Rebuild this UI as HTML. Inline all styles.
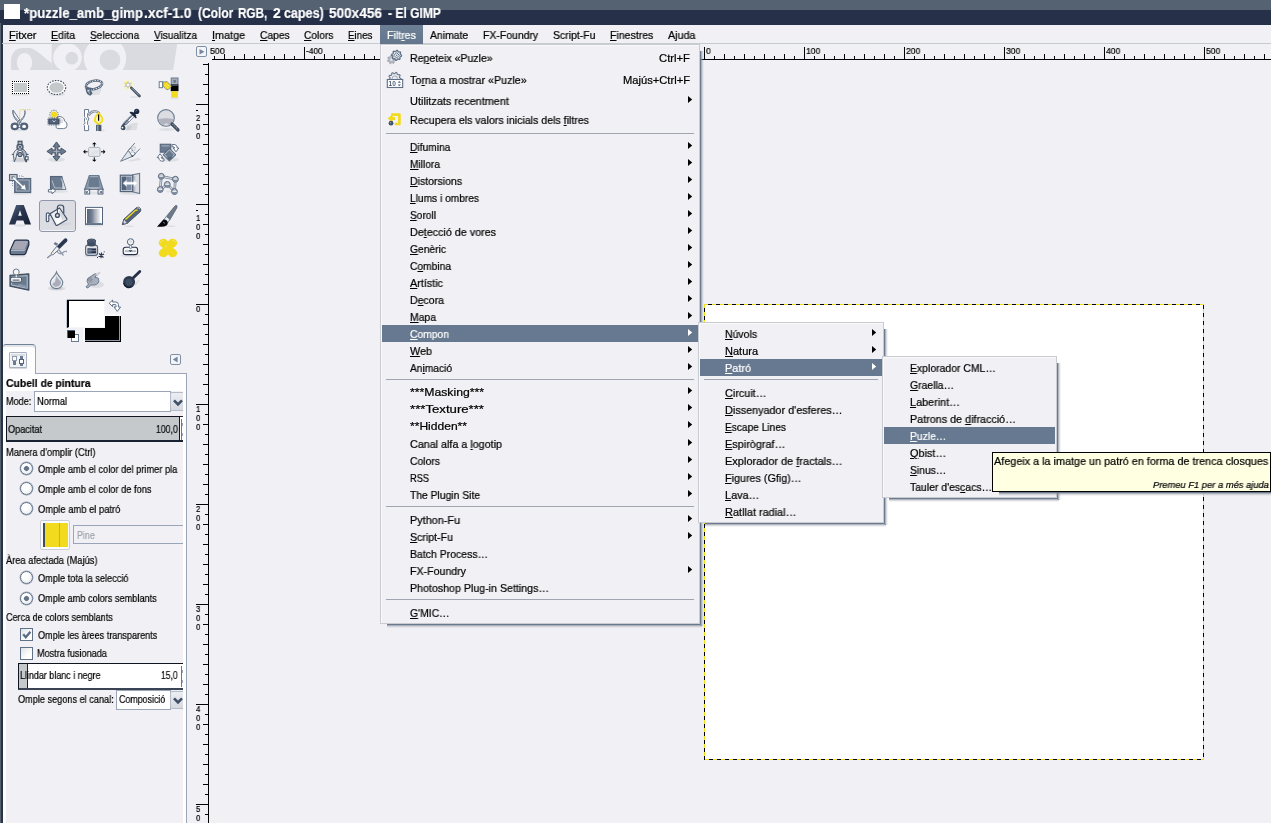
<!DOCTYPE html>
<html><head><meta charset="utf-8"><title>GIMP</title>
<style>
html,body{margin:0;padding:0;}
html{overflow:hidden;width:1271px;height:823px;}
body{width:1271px;height:823px;overflow:hidden;background:#f1f1f5;font-family:"Liberation Sans", sans-serif;position:relative;}
.t{will-change:transform;-webkit-text-stroke:0.22px currentColor;position:absolute;white-space:pre;font-family:"Liberation Sans", sans-serif;}
.b{position:absolute;box-sizing:border-box;}
u{text-decoration:underline;text-underline-offset:1.2px;text-decoration-thickness:1px;}
svg{position:absolute;overflow:visible;}
</style></head><body>
<div class="b" style="left:0px;top:0px;width:1271px;height:10px;background:#546271;"></div><div class="b" style="left:0px;top:10px;width:1271px;height:15px;background:#263149;"></div><div class="b" style="left:4px;top:4px;width:16px;height:15px;background:#fff;"></div><div class="t" style="top:5.0px;font-size:14px;line-height:16px;color:#fff;left:24.0px;transform:scaleX(0.9442);transform-origin:0 0;font-weight:bold;">*puzzle_amb_gimp</div><div class="t" style="top:5.0px;font-size:14px;line-height:16px;color:#fff;left:144.3px;transform:scaleX(0.9824);transform-origin:0 0;font-weight:bold;">.xcf-1.0</div><div class="t" style="top:5.0px;font-size:14px;line-height:16px;color:#fff;left:197.6px;transform:scaleX(0.8564);transform-origin:0 0;font-weight:bold;">(Color</div><div class="t" style="top:5.0px;font-size:14px;line-height:16px;color:#fff;left:237.7px;transform:scaleX(0.8371);transform-origin:0 0;font-weight:bold;">RGB,</div><div class="t" style="top:5.0px;font-size:14px;line-height:16px;color:#fff;left:272.5px;transform:scaleX(0.9876);transform-origin:0 0;font-weight:bold;">2</div><div class="t" style="top:5.0px;font-size:14px;line-height:16px;color:#fff;left:283.5px;transform:scaleX(0.8950);transform-origin:0 0;font-weight:bold;">capes)</div><div class="t" style="top:5.0px;font-size:14px;line-height:16px;color:#fff;left:328.7px;transform:scaleX(0.9704);transform-origin:0 0;font-weight:bold;">500x456</div><div class="t" style="top:5.0px;font-size:14px;line-height:16px;color:#fff;left:388.2px;transform:scaleX(0.8608);transform-origin:0 0;font-weight:bold;">- El GIMP</div><div class="b" style="left:0px;top:23px;width:1px;height:800px;background:#56636f;"></div><div class="b" style="left:1px;top:23px;width:2px;height:800px;background:#283349;"></div><div class="b" style="left:2px;top:43px;width:1269px;height:1px;background:#c6cbce;"></div><div class="t" style="top:27.6px;font-size:11px;line-height:14px;color:#000;left:9.3px;"><u>F</u>itxer</div><div class="t" style="top:27.6px;font-size:11px;line-height:14px;color:#000;left:51.3px;transform:scaleX(0.9610);transform-origin:0 0;"><u>E</u>dita</div><div class="t" style="top:27.6px;font-size:11px;line-height:14px;color:#000;left:89.8px;transform:scaleX(0.9140);transform-origin:0 0;"><u>S</u>elecciona</div><div class="t" style="top:27.6px;font-size:11px;line-height:14px;color:#000;left:153.8px;transform:scaleX(0.9192);transform-origin:0 0;"><u>V</u>isualitza</div><div class="t" style="top:27.6px;font-size:11px;line-height:14px;color:#000;left:211.9px;transform:scaleX(0.9839);transform-origin:0 0;"><u>I</u>matge</div><div class="t" style="top:27.6px;font-size:11px;line-height:14px;color:#000;left:259.5px;transform:scaleX(0.9341);transform-origin:0 0;"><u>C</u>apes</div><div class="t" style="top:27.6px;font-size:11px;line-height:14px;color:#000;left:303.7px;transform:scaleX(0.9246);transform-origin:0 0;"><u>C</u>olors</div><div class="t" style="top:27.6px;font-size:11px;line-height:14px;color:#000;left:347.6px;transform:scaleX(0.8863);transform-origin:0 0;"><u>E</u>ines</div><div class="b" style="left:380px;top:25px;width:43px;height:19px;background:linear-gradient(#6d7f94,#64768b);"></div><div class="t" style="top:27.6px;font-size:11px;line-height:14px;color:#fff;left:386.5px;transform:scaleX(0.9648);transform-origin:0 0;">Filt<u>r</u>es</div><div class="t" style="top:27.6px;font-size:11px;line-height:14px;color:#000;left:429.8px;transform:scaleX(0.9465);transform-origin:0 0;">Animate</div><div class="t" style="top:27.6px;font-size:11px;line-height:14px;color:#000;left:482.5px;transform:scaleX(0.9504);transform-origin:0 0;">FX-Foundry</div><div class="t" style="top:27.6px;font-size:11px;line-height:14px;color:#000;left:552.5px;transform:scaleX(0.9524);transform-origin:0 0;">Script-Fu</div><div class="t" style="top:27.6px;font-size:11px;line-height:14px;color:#000;left:609.7px;transform:scaleX(0.9569);transform-origin:0 0;"><u>F</u>inestres</div><div class="t" style="top:27.6px;font-size:11px;line-height:14px;color:#000;left:667.8px;transform:scaleX(0.9737);transform-origin:0 0;">A<u>j</u>uda</div><svg style="left:0;top:0" width="1271" height="823" shape-rendering="crispEdges"><rect x="212" y="59" width="1059" height="1" fill="#000"/><rect x="214" y="56" width="1" height="3" fill="#000"/><rect x="224" y="54" width="1" height="5" fill="#000"/><rect x="234" y="56" width="1" height="3" fill="#000"/><rect x="244" y="54" width="1" height="5" fill="#000"/><rect x="254" y="56" width="1" height="3" fill="#000"/><rect x="264" y="54" width="1" height="5" fill="#000"/><rect x="274" y="56" width="1" height="3" fill="#000"/><rect x="284" y="54" width="1" height="5" fill="#000"/><rect x="294" y="56" width="1" height="3" fill="#000"/><rect x="304" y="47" width="1" height="12" fill="#000"/><rect x="314" y="56" width="1" height="3" fill="#000"/><rect x="324" y="54" width="1" height="5" fill="#000"/><rect x="334" y="56" width="1" height="3" fill="#000"/><rect x="344" y="54" width="1" height="5" fill="#000"/><rect x="354" y="56" width="1" height="3" fill="#000"/><rect x="364" y="54" width="1" height="5" fill="#000"/><rect x="374" y="56" width="1" height="3" fill="#000"/><rect x="384" y="54" width="1" height="5" fill="#000"/><rect x="394" y="56" width="1" height="3" fill="#000"/><rect x="404" y="47" width="1" height="12" fill="#000"/><rect x="414" y="56" width="1" height="3" fill="#000"/><rect x="424" y="54" width="1" height="5" fill="#000"/><rect x="434" y="56" width="1" height="3" fill="#000"/><rect x="444" y="54" width="1" height="5" fill="#000"/><rect x="454" y="56" width="1" height="3" fill="#000"/><rect x="464" y="54" width="1" height="5" fill="#000"/><rect x="474" y="56" width="1" height="3" fill="#000"/><rect x="484" y="54" width="1" height="5" fill="#000"/><rect x="494" y="56" width="1" height="3" fill="#000"/><rect x="504" y="47" width="1" height="12" fill="#000"/><rect x="514" y="56" width="1" height="3" fill="#000"/><rect x="524" y="54" width="1" height="5" fill="#000"/><rect x="534" y="56" width="1" height="3" fill="#000"/><rect x="544" y="54" width="1" height="5" fill="#000"/><rect x="554" y="56" width="1" height="3" fill="#000"/><rect x="564" y="54" width="1" height="5" fill="#000"/><rect x="574" y="56" width="1" height="3" fill="#000"/><rect x="584" y="54" width="1" height="5" fill="#000"/><rect x="594" y="56" width="1" height="3" fill="#000"/><rect x="604" y="47" width="1" height="12" fill="#000"/><rect x="614" y="56" width="1" height="3" fill="#000"/><rect x="624" y="54" width="1" height="5" fill="#000"/><rect x="634" y="56" width="1" height="3" fill="#000"/><rect x="644" y="54" width="1" height="5" fill="#000"/><rect x="654" y="56" width="1" height="3" fill="#000"/><rect x="664" y="54" width="1" height="5" fill="#000"/><rect x="674" y="56" width="1" height="3" fill="#000"/><rect x="684" y="54" width="1" height="5" fill="#000"/><rect x="694" y="56" width="1" height="3" fill="#000"/><rect x="704" y="47" width="1" height="12" fill="#000"/><rect x="714" y="56" width="1" height="3" fill="#000"/><rect x="724" y="54" width="1" height="5" fill="#000"/><rect x="734" y="56" width="1" height="3" fill="#000"/><rect x="744" y="54" width="1" height="5" fill="#000"/><rect x="754" y="56" width="1" height="3" fill="#000"/><rect x="764" y="54" width="1" height="5" fill="#000"/><rect x="774" y="56" width="1" height="3" fill="#000"/><rect x="784" y="54" width="1" height="5" fill="#000"/><rect x="794" y="56" width="1" height="3" fill="#000"/><rect x="804" y="47" width="1" height="12" fill="#000"/><rect x="814" y="56" width="1" height="3" fill="#000"/><rect x="824" y="54" width="1" height="5" fill="#000"/><rect x="834" y="56" width="1" height="3" fill="#000"/><rect x="844" y="54" width="1" height="5" fill="#000"/><rect x="854" y="56" width="1" height="3" fill="#000"/><rect x="864" y="54" width="1" height="5" fill="#000"/><rect x="874" y="56" width="1" height="3" fill="#000"/><rect x="884" y="54" width="1" height="5" fill="#000"/><rect x="894" y="56" width="1" height="3" fill="#000"/><rect x="904" y="47" width="1" height="12" fill="#000"/><rect x="914" y="56" width="1" height="3" fill="#000"/><rect x="924" y="54" width="1" height="5" fill="#000"/><rect x="934" y="56" width="1" height="3" fill="#000"/><rect x="944" y="54" width="1" height="5" fill="#000"/><rect x="954" y="56" width="1" height="3" fill="#000"/><rect x="964" y="54" width="1" height="5" fill="#000"/><rect x="974" y="56" width="1" height="3" fill="#000"/><rect x="984" y="54" width="1" height="5" fill="#000"/><rect x="994" y="56" width="1" height="3" fill="#000"/><rect x="1004" y="47" width="1" height="12" fill="#000"/><rect x="1014" y="56" width="1" height="3" fill="#000"/><rect x="1024" y="54" width="1" height="5" fill="#000"/><rect x="1034" y="56" width="1" height="3" fill="#000"/><rect x="1044" y="54" width="1" height="5" fill="#000"/><rect x="1054" y="56" width="1" height="3" fill="#000"/><rect x="1064" y="54" width="1" height="5" fill="#000"/><rect x="1074" y="56" width="1" height="3" fill="#000"/><rect x="1084" y="54" width="1" height="5" fill="#000"/><rect x="1094" y="56" width="1" height="3" fill="#000"/><rect x="1104" y="47" width="1" height="12" fill="#000"/><rect x="1114" y="56" width="1" height="3" fill="#000"/><rect x="1124" y="54" width="1" height="5" fill="#000"/><rect x="1134" y="56" width="1" height="3" fill="#000"/><rect x="1144" y="54" width="1" height="5" fill="#000"/><rect x="1154" y="56" width="1" height="3" fill="#000"/><rect x="1164" y="54" width="1" height="5" fill="#000"/><rect x="1174" y="56" width="1" height="3" fill="#000"/><rect x="1184" y="54" width="1" height="5" fill="#000"/><rect x="1194" y="56" width="1" height="3" fill="#000"/><rect x="1204" y="47" width="1" height="12" fill="#000"/><rect x="1214" y="56" width="1" height="3" fill="#000"/><rect x="1224" y="54" width="1" height="5" fill="#000"/><rect x="1234" y="56" width="1" height="3" fill="#000"/><rect x="1244" y="54" width="1" height="5" fill="#000"/><rect x="1254" y="56" width="1" height="3" fill="#000"/><rect x="1264" y="54" width="1" height="5" fill="#000"/><rect x="208" y="63" width="1" height="760" fill="#000"/><rect x="203" y="64" width="5" height="1" fill="#000"/><rect x="205" y="74" width="3" height="1" fill="#000"/><rect x="203" y="84" width="5" height="1" fill="#000"/><rect x="205" y="94" width="3" height="1" fill="#000"/><rect x="196" y="104" width="12" height="1" fill="#000"/><rect x="205" y="114" width="3" height="1" fill="#000"/><rect x="203" y="124" width="5" height="1" fill="#000"/><rect x="205" y="134" width="3" height="1" fill="#000"/><rect x="203" y="144" width="5" height="1" fill="#000"/><rect x="205" y="154" width="3" height="1" fill="#000"/><rect x="203" y="164" width="5" height="1" fill="#000"/><rect x="205" y="174" width="3" height="1" fill="#000"/><rect x="203" y="184" width="5" height="1" fill="#000"/><rect x="205" y="194" width="3" height="1" fill="#000"/><rect x="196" y="204" width="12" height="1" fill="#000"/><rect x="205" y="214" width="3" height="1" fill="#000"/><rect x="203" y="224" width="5" height="1" fill="#000"/><rect x="205" y="234" width="3" height="1" fill="#000"/><rect x="203" y="244" width="5" height="1" fill="#000"/><rect x="205" y="254" width="3" height="1" fill="#000"/><rect x="203" y="264" width="5" height="1" fill="#000"/><rect x="205" y="274" width="3" height="1" fill="#000"/><rect x="203" y="284" width="5" height="1" fill="#000"/><rect x="205" y="294" width="3" height="1" fill="#000"/><rect x="196" y="304" width="12" height="1" fill="#000"/><rect x="205" y="314" width="3" height="1" fill="#000"/><rect x="203" y="324" width="5" height="1" fill="#000"/><rect x="205" y="334" width="3" height="1" fill="#000"/><rect x="203" y="344" width="5" height="1" fill="#000"/><rect x="205" y="354" width="3" height="1" fill="#000"/><rect x="203" y="364" width="5" height="1" fill="#000"/><rect x="205" y="374" width="3" height="1" fill="#000"/><rect x="203" y="384" width="5" height="1" fill="#000"/><rect x="205" y="394" width="3" height="1" fill="#000"/><rect x="196" y="404" width="12" height="1" fill="#000"/><rect x="205" y="414" width="3" height="1" fill="#000"/><rect x="203" y="424" width="5" height="1" fill="#000"/><rect x="205" y="434" width="3" height="1" fill="#000"/><rect x="203" y="444" width="5" height="1" fill="#000"/><rect x="205" y="454" width="3" height="1" fill="#000"/><rect x="203" y="464" width="5" height="1" fill="#000"/><rect x="205" y="474" width="3" height="1" fill="#000"/><rect x="203" y="484" width="5" height="1" fill="#000"/><rect x="205" y="494" width="3" height="1" fill="#000"/><rect x="196" y="504" width="12" height="1" fill="#000"/><rect x="205" y="514" width="3" height="1" fill="#000"/><rect x="203" y="524" width="5" height="1" fill="#000"/><rect x="205" y="534" width="3" height="1" fill="#000"/><rect x="203" y="544" width="5" height="1" fill="#000"/><rect x="205" y="554" width="3" height="1" fill="#000"/><rect x="203" y="564" width="5" height="1" fill="#000"/><rect x="205" y="574" width="3" height="1" fill="#000"/><rect x="203" y="584" width="5" height="1" fill="#000"/><rect x="205" y="594" width="3" height="1" fill="#000"/><rect x="196" y="604" width="12" height="1" fill="#000"/><rect x="205" y="614" width="3" height="1" fill="#000"/><rect x="203" y="624" width="5" height="1" fill="#000"/><rect x="205" y="634" width="3" height="1" fill="#000"/><rect x="203" y="644" width="5" height="1" fill="#000"/><rect x="205" y="654" width="3" height="1" fill="#000"/><rect x="203" y="664" width="5" height="1" fill="#000"/><rect x="205" y="674" width="3" height="1" fill="#000"/><rect x="203" y="684" width="5" height="1" fill="#000"/><rect x="205" y="694" width="3" height="1" fill="#000"/><rect x="196" y="704" width="12" height="1" fill="#000"/><rect x="205" y="714" width="3" height="1" fill="#000"/><rect x="203" y="724" width="5" height="1" fill="#000"/><rect x="205" y="734" width="3" height="1" fill="#000"/><rect x="203" y="744" width="5" height="1" fill="#000"/><rect x="205" y="754" width="3" height="1" fill="#000"/><rect x="203" y="764" width="5" height="1" fill="#000"/><rect x="205" y="774" width="3" height="1" fill="#000"/><rect x="203" y="784" width="5" height="1" fill="#000"/><rect x="205" y="794" width="3" height="1" fill="#000"/><rect x="196" y="804" width="12" height="1" fill="#000"/><rect x="205" y="814" width="3" height="1" fill="#000"/></svg><div class="t" style="top:46.0px;font-size:9.6px;line-height:10px;color:#000;left:209.7px;transform:scaleX(0.9179);transform-origin:0 0;">500</div><div class="t" style="top:46.0px;font-size:9.6px;line-height:10px;color:#000;left:306.0px;transform:scaleX(0.8723);transform-origin:0 0;">-400</div><div class="t" style="top:46.0px;font-size:9.6px;line-height:10px;color:#000;left:706.0px;transform:scaleX(0.8889);transform-origin:0 0;">0</div><div class="t" style="top:46.0px;font-size:9.6px;line-height:10px;color:#000;left:806.0px;transform:scaleX(0.8898);transform-origin:0 0;">100</div><div class="t" style="top:46.0px;font-size:9.6px;line-height:10px;color:#000;left:906.0px;transform:scaleX(0.8898);transform-origin:0 0;">200</div><div class="t" style="top:46.0px;font-size:9.6px;line-height:10px;color:#000;left:1006.0px;transform:scaleX(0.8898);transform-origin:0 0;">300</div><div class="t" style="top:46.0px;font-size:9.6px;line-height:10px;color:#000;left:1106.0px;transform:scaleX(0.8898);transform-origin:0 0;">400</div><div class="t" style="top:46.0px;font-size:9.6px;line-height:10px;color:#000;left:1206.0px;transform:scaleX(0.8898);transform-origin:0 0;">500</div><div class="b" style="left:196px;top:110px;width:2px;height:1px;background:#000;"></div><div class="t" style="top:113.3px;font-size:9.6px;line-height:10px;color:#000;left:195.8px;transform:scaleX(0.8234);transform-origin:0 0;">2</div><div class="t" style="top:122.3px;font-size:9.6px;line-height:10px;color:#000;left:195.8px;transform:scaleX(0.8234);transform-origin:0 0;">0</div><div class="t" style="top:131.3px;font-size:9.6px;line-height:10px;color:#000;left:195.8px;transform:scaleX(0.8234);transform-origin:0 0;">0</div><div class="b" style="left:196px;top:210px;width:2px;height:1px;background:#000;"></div><div class="t" style="top:213.3px;font-size:9.6px;line-height:10px;color:#000;left:195.8px;transform:scaleX(0.8234);transform-origin:0 0;">1</div><div class="t" style="top:222.3px;font-size:9.6px;line-height:10px;color:#000;left:195.8px;transform:scaleX(0.8234);transform-origin:0 0;">0</div><div class="t" style="top:231.3px;font-size:9.6px;line-height:10px;color:#000;left:195.8px;transform:scaleX(0.8234);transform-origin:0 0;">0</div><div class="t" style="top:304.3px;font-size:9.6px;line-height:10px;color:#000;left:195.8px;transform:scaleX(0.8234);transform-origin:0 0;">0</div><div class="t" style="top:404.3px;font-size:9.6px;line-height:10px;color:#000;left:195.8px;transform:scaleX(0.8234);transform-origin:0 0;">1</div><div class="t" style="top:413.3px;font-size:9.6px;line-height:10px;color:#000;left:195.8px;transform:scaleX(0.8234);transform-origin:0 0;">0</div><div class="t" style="top:422.3px;font-size:9.6px;line-height:10px;color:#000;left:195.8px;transform:scaleX(0.8234);transform-origin:0 0;">0</div><div class="t" style="top:504.3px;font-size:9.6px;line-height:10px;color:#000;left:195.8px;transform:scaleX(0.8234);transform-origin:0 0;">2</div><div class="t" style="top:513.3px;font-size:9.6px;line-height:10px;color:#000;left:195.8px;transform:scaleX(0.8234);transform-origin:0 0;">0</div><div class="t" style="top:522.3px;font-size:9.6px;line-height:10px;color:#000;left:195.8px;transform:scaleX(0.8234);transform-origin:0 0;">0</div><div class="t" style="top:604.3px;font-size:9.6px;line-height:10px;color:#000;left:195.8px;transform:scaleX(0.8234);transform-origin:0 0;">3</div><div class="t" style="top:613.3px;font-size:9.6px;line-height:10px;color:#000;left:195.8px;transform:scaleX(0.8234);transform-origin:0 0;">0</div><div class="t" style="top:622.3px;font-size:9.6px;line-height:10px;color:#000;left:195.8px;transform:scaleX(0.8234);transform-origin:0 0;">0</div><div class="t" style="top:704.3px;font-size:9.6px;line-height:10px;color:#000;left:195.8px;transform:scaleX(0.8234);transform-origin:0 0;">4</div><div class="t" style="top:713.3px;font-size:9.6px;line-height:10px;color:#000;left:195.8px;transform:scaleX(0.8234);transform-origin:0 0;">0</div><div class="t" style="top:722.3px;font-size:9.6px;line-height:10px;color:#000;left:195.8px;transform:scaleX(0.8234);transform-origin:0 0;">0</div><div class="t" style="top:804.3px;font-size:9.6px;line-height:10px;color:#000;left:195.8px;transform:scaleX(0.8234);transform-origin:0 0;">5</div><div class="t" style="top:813.3px;font-size:9.6px;line-height:10px;color:#000;left:195.8px;transform:scaleX(0.8234);transform-origin:0 0;">0</div><div class="t" style="top:822.3px;font-size:9.6px;line-height:10px;color:#000;left:195.8px;transform:scaleX(0.8234);transform-origin:0 0;">0</div><div class="b" style="left:196px;top:46px;width:11px;height:11px;border:1px solid #7f8fa6;border-radius:2px;background:#f4f5f8;"></div><svg style="left:199px;top:49px" width="6" height="6"><path d="M0.5,0 L5.5,2.7 L0.5,5.5 Z" fill="#7588a0"/></svg><div class="b" style="left:704px;top:304px;width:500px;height:456px;background:#fff;"></div><svg style="left:704px;top:304px" width="500" height="456" shape-rendering="crispEdges"><rect x="0.5" y="0.5" width="499" height="455" fill="none" stroke="#f4dc1f" stroke-width="1"/><g stroke="#000" stroke-width="1" stroke-dasharray="4 4" fill="none"><line x1="0" y1="0.5" x2="500" y2="0.5" stroke-dashoffset="4"/><line x1="0.5" y1="0" x2="0.5" y2="456" stroke-dashoffset="4"/><line x1="499.5" y1="0" x2="499.5" y2="456" stroke-dashoffset="7"/><line x1="0" y1="455.5" x2="500" y2="455.5" stroke-dashoffset="3"/></g></svg><svg style="left:0;top:0" width="190" height="75"><defs><clipPath id="wc"><rect x="0" y="44" width="190" height="26"/></clipPath></defs><g clip-path="url(#wc)"><path d="M10.9,70 L10.9,62 C10.9,53 15.5,47.9 22.5,47.9 L30.5,47.9 C36,49.5 43,56 51.8,63.4 L51.8,70 Z" fill="#dadbe0"/><ellipse cx="24.5" cy="62.7" rx="7.65" ry="9.7" fill="#f1f1f5"/><path d="M51.6,44 L177.2,44 L173.2,70 L51.6,70 Z" fill="#dadbe0"/><circle cx="67.5" cy="57.5" r="14.2" fill="#f1f1f5"/><circle cx="71.8" cy="58.2" r="6.4" fill="#dadbe0"/><circle cx="105" cy="58" r="21.2" fill="#f1f1f5"/><circle cx="110" cy="59.8" r="10.4" fill="#dadbe0"/></g></svg><div class="b" style="left:39px;top:200px;width:37px;height:32px;background:#dcdde3;border:1px solid #8f97a8;border-radius:3px;box-shadow:inset 0 -1px 0 #f4f4f7;"></div><svg style="left:0;top:0" width="190" height="300"><g transform="translate(8,76)"><g shape-rendering="crispEdges"><rect x="3" y="18" width="19" height="1" fill="#dcdee2"/><rect x="5" y="19" width="15" height="1" fill="#e6e7ea"/><rect x="4" y="5" width="17" height="13" fill="#fff"/><g fill="#000"><rect x="4" y="5" width="1" height="1"/><rect x="4" y="17" width="1" height="1"/><rect x="6" y="5" width="1" height="1"/><rect x="6" y="17" width="1" height="1"/><rect x="8" y="5" width="1" height="1"/><rect x="8" y="17" width="1" height="1"/><rect x="10" y="5" width="1" height="1"/><rect x="10" y="17" width="1" height="1"/><rect x="12" y="5" width="1" height="1"/><rect x="12" y="17" width="1" height="1"/><rect x="14" y="5" width="1" height="1"/><rect x="14" y="17" width="1" height="1"/><rect x="16" y="5" width="1" height="1"/><rect x="16" y="17" width="1" height="1"/><rect x="18" y="5" width="1" height="1"/><rect x="18" y="17" width="1" height="1"/><rect x="20" y="5" width="1" height="1"/><rect x="20" y="17" width="1" height="1"/><rect x="4" y="5" width="1" height="1"/><rect x="20" y="5" width="1" height="1"/><rect x="4" y="7" width="1" height="1"/><rect x="20" y="7" width="1" height="1"/><rect x="4" y="9" width="1" height="1"/><rect x="20" y="9" width="1" height="1"/><rect x="4" y="11" width="1" height="1"/><rect x="20" y="11" width="1" height="1"/><rect x="4" y="13" width="1" height="1"/><rect x="20" y="13" width="1" height="1"/><rect x="4" y="15" width="1" height="1"/><rect x="20" y="15" width="1" height="1"/><rect x="4" y="17" width="1" height="1"/><rect x="20" y="17" width="1" height="1"/></g><rect x="6" y="7" width="13" height="9" fill="#c5c9cc"/></g></g><g transform="translate(45,76)"><ellipse cx="12" cy="18.5" rx="8" ry="1.5" fill="#dcdee2" opacity="1"/><ellipse cx="11.5" cy="11.5" rx="9.2" ry="7" fill="#fff" stroke="#3f4d61" stroke-width="1.1" stroke-dasharray="1.6 1.2"/><ellipse cx="11.5" cy="11.5" rx="7.2" ry="5.2" fill="#c5c9cc"/></g><g transform="translate(82,76)"><path d="M4,14.5 L20,11.5 L17.5,18.5 L6,19.8 Z" fill="#dcdee2" opacity=".9"/><g transform="rotate(-12 12 8.9)"><ellipse cx="12" cy="8.9" rx="8.3" ry="4.1" fill="none" stroke="#52637a" stroke-width="2.5"/><ellipse cx="12" cy="8.9" rx="8.3" ry="4.1" fill="none" stroke="#e9ebef" stroke-width="1" stroke-dasharray="1.3 1.3"/></g><path d="M3.6,11.2 L9.6,11.8 L9,14.6 L10.6,17.6 L8.2,19.8 L5,17.8 L3.8,14.4 Z" fill="#52637a"/><path d="M6,13.5 L7.5,17.5 M5,15 L8,14" stroke="#dfe2e8" stroke-width=".8"/></g><g transform="translate(119,76)"><ellipse cx="15" cy="21" rx="4" ry="1" fill="#dcdee2" opacity="0.8"/><circle cx="9" cy="8.8" r="5.2" fill="#f8f5c4" opacity=".9"/><path d="M9,4.6 L10.3,7 L13,6.5 L11.5,8.8 L13,11.2 L10.3,10.7 L9,13 L7.7,10.7 L5,11.2 L6.5,8.8 L5,6.5 L7.7,7 Z" fill="#c5c9cc"/><rect x="8" y="7.8" width="2" height="2" fill="#fff"/><rect x="7" y="6.5" width="1.2" height="1.2" fill="#f2da1e"/><rect x="11.3" y="10.3" width="1.3" height="1.3" fill="#f2da1e"/><path d="M12.3,11.8 L20.5,20" stroke="#3f4d61" stroke-width="2.6" stroke-linecap="round"/><path d="M12.8,12.1 L20,19.3" stroke="#b9bec9" stroke-width=".8"/></g><g transform="translate(156,76)"><ellipse cx="18.5" cy="22.3" rx="4.5" ry="1" fill="#dcdee2" opacity="0.9"/><rect x="15.2" y="2" width="6.8" height="6.6" fill="#a6acb8" stroke="#6a7b8f" stroke-width="1"/><rect x="17.3" y="4" width="2.6" height="2.6" fill="#6a7b8f"/><rect x="14.7" y="8.6" width="7.8" height="6.6" fill="#000"/><rect x="15.5" y="9" width="6.3" height="1" fill="#3f4d61"/><rect x="15.2" y="15.2" width="6.8" height="6.3" fill="#f2da1e"/><rect x="3.2" y="5.7" width="3.4" height="6" fill="#fff" stroke="#6a7b8f" stroke-width="1"/><path d="M7,6 L11.2,5.6 L15.5,10.2 L12,13.8 L10,13.2 L7,10 Z" fill="#f2da1e" stroke="#6a7b8f" stroke-width=".7"/><path d="M9.5,9.5 L12.5,12.5 M11,8 L14,11" stroke="#fff" stroke-width=".7" stroke-dasharray="1 1"/></g><g transform="translate(8,108)"><ellipse cx="11.5" cy="22" rx="8" ry="1.2" fill="#dcdee2" opacity="0.9"/><path d="M5.1,2.1 C4,7 8,12 13.3,14 L11.5,15 C7,12 4,7 5.1,2.1 Z M5.1,2.1 L12.5,13" fill="#e4e6ea" stroke="#6a7b8f" stroke-width="1"/><path d="M16.8,2.5 C18,7 14,12 9,14 L10.5,15 C15,12 18,7 16.8,2.5 Z" fill="#e4e6ea" stroke="#6a7b8f" stroke-width="1"/><ellipse cx="6.8" cy="18.4" rx="3.1" ry="2.7" fill="#fff" stroke="#52637a" stroke-width="2.2"/><ellipse cx="16.1" cy="18.4" rx="3.1" ry="2.7" fill="#fff" stroke="#52637a" stroke-width="2.2"/><path d="M10,19.5 L11.5,15.5 L13,19.5 Z" fill="#fff" stroke="#52637a" stroke-width=".8"/><path d="M11.6,10 L11.6,4 Q11.6,1.6 14,1.6 L22.8,1.6" fill="none" stroke="#f2da1e" stroke-width="1.1" stroke-dasharray="1.2 0.9"/></g><g transform="translate(45,108)"><path d="M12.5,9 Q15,7.5 17.5,9.5 Q19.5,10 19.5,13 Q22.5,14 22,17.5 Q22,20.6 18.5,20.6 L13,20.6 Q10.5,20.5 11,17.5 Z" fill="#fff" stroke="#6a7b8f" stroke-width="1"/><path d="M14,11 Q16,9 18,12 L18,15 L14,15 Z" fill="#dcdde2"/><circle cx="9" cy="6.4" r="4.2" fill="none" stroke="#3f4d61" stroke-width=".9" stroke-dasharray=".9 .9"/><circle cx="9" cy="6.6" r="3.1" fill="#f2da1e"/><rect x="3.2" y="10.4" width="11.2" height="6.2" rx="1" fill="#3f4d61"/><rect x="4.4" y="11.4" width="8.8" height="4.2" fill="#52637a"/><rect x="2.7" y="9.9" width="12.2" height="7.2" rx="1" fill="none" stroke="#3f4d61" stroke-width=".7" stroke-dasharray=".9 .9"/><path d="M7.5,12.3 L9,14 L10.5,12.3" fill="none" stroke="#cfd3da" stroke-width=".9"/></g><g transform="translate(82,108)"><ellipse cx="19" cy="22.6" rx="4" ry="1" fill="#dcdee2" opacity="0.8"/><path d="M2.5,1.5 L6.6,1.5 L6.6,4.5 L5.6,5.5 L5.6,9 L6.6,10 L6.6,12 L5.6,13 L5.6,16.5 L6.6,17.5 L6.6,22.6 L2.5,22.6 L2.5,17.5 L1.7,16.5 L3.2,15 L2.5,13.5 L2.5,10.5 L3.2,9.5 L2.5,8.5 Z" fill="#fff" stroke="#6a7b8f" stroke-width="1"/><circle cx="4.5" cy="11" r=".8" fill="#6a7b8f"/><path d="M6.5,7.5 C9,3 14,1.5 17.5,5.5" fill="none" stroke="#6a7b8f" stroke-width="2.2"/><path d="M6.5,7.5 C9,3 14,1.5 17.5,5.5" fill="none" stroke="#eceef1" stroke-width=".9"/><path d="M16.6,5.2 C18.5,7 20.8,10.5 20.4,13 L16.6,16.6 L12.8,13 C12.4,10.5 14.8,7 16.6,5.2 Z" fill="#fbf5b0" stroke="#f2da1e" stroke-width="1.7"/><path d="M16.6,6.5 L16.6,12.8" stroke="#000" stroke-width="1.2"/><rect x="14" y="16.8" width="5.4" height="6.2" fill="#52637a"/><rect x="15.3" y="17.5" width="1" height="5.5" fill="#aab1bd"/><rect x="17.5" y="17.5" width="1" height="5.5" fill="#3f4d61"/></g><g transform="translate(119,108)"><path d="M6,22.4 L8,17.5 L14,14.8 L19,14.8 L17.5,22 Z" fill="#dcdee2"/><path d="M7,22 L8.5,18.5 L13,18 L11,22 Z" fill="#cdd0d6"/><path d="M15.2,6.4 L5.4,16.2" stroke="#52637a" stroke-width="3.6" stroke-linecap="butt"/><path d="M15,7.4 L9.5,12.9" stroke="#fff" stroke-width="1.4"/><path d="M9.5,12.9 L5.8,16.6" stroke="#9aa5b5" stroke-width="1.4"/><path d="M14.2,5.6 L4.8,15" stroke="#e9ebef" stroke-width=".8" stroke-dasharray="1 1"/><path d="M6,15.4 Q3,17.5 2.6,20.6" stroke="#3f4d61" stroke-width="2.2" fill="none"/><circle cx="4.2" cy="19.9" r="2.3" fill="#3f4d61"/><circle cx="3.4" cy="19.6" r=".9" fill="#fff"/><path d="M12.1,4.3 L16.7,8.7" stroke="#1c2741" stroke-width="2.4"/><path d="M10.8,4.3 L13.5,5.2 M16,8 L17.2,10.2" stroke="#1c2741" stroke-width="1.4"/><path d="M14.4,6.5 L17,4" stroke="#1c2741" stroke-width="3"/><circle cx="17.7" cy="3.4" r="2.6" fill="#1c2741"/><path d="M16.6,3.6 Q16.8,2.2 18.4,2.2" stroke="#6a7b8f" stroke-width=".9" fill="none"/></g><g transform="translate(156,108)"><ellipse cx="11" cy="21.5" rx="8" ry="1.5" fill="#dcdee2" opacity="0.9"/><circle cx="10" cy="9.9" r="8.3" fill="#dcdde2" stroke="#6a7b8f" stroke-width="1.1"/><path d="M2.6,11 Q10,9.5 17.4,11 Q16.5,16 13,17 L10.5,15 L7.5,17 Q3.5,15.5 2.6,11 Z" fill="#b0b3be"/><path d="M16,16 L22,22" stroke="#3f4d61" stroke-width="3.2" stroke-linecap="round"/><path d="M16.6,16.2 L21.8,21.4" stroke="#c9cdd6" stroke-width="1" stroke-dasharray="1 .8"/></g><g transform="translate(8,140)"><ellipse cx="11.8" cy="20.8" rx="9.5" ry="1.6" fill="#dcdee2" opacity="0.9"/><rect x="8" y="18" width="8" height="3.4" fill="#c9ccd2" opacity=".8"/><path d="M3.8,14.4 L20.6,14.4" stroke="#263149" stroke-width=".9"/><path d="M9.6,9 C6.5,10.5 5.2,13 5.4,15.5 L6.4,22 L8.2,17 C8.5,14 9.2,12 10.8,10.6 Z" fill="#e4e7eb" stroke="#52637a" stroke-width="1" stroke-linejoin="round"/><path d="M14.4,9 C17.5,10.5 18.8,13 18.6,15.5 L17.6,22 L15.8,17 C15.5,14 14.8,12 13.2,10.6 Z" fill="#a7b0be" stroke="#52637a" stroke-width="1" stroke-linejoin="round"/><rect x="10.1" y="1.2" width="3.9" height="3.7" fill="#a9afba" stroke="#3f4d61" stroke-width="1.1"/><rect x="9" y="4.9" width="6" height="4.1" rx="1" fill="#8b97a8" stroke="#3f4d61" stroke-width="1.1"/><circle cx="12" cy="6.9" r="1.5" fill="#3f4d61" stroke="#c9ced6" stroke-width=".8"/><path d="M9.9,12.4 Q12,9.9 14.1,12.4" fill="none" stroke="#52637a" stroke-width="2.2"/><path d="M9.9,12.4 Q12,9.9 14.1,12.4" fill="none" stroke="#fff" stroke-width="1"/><circle cx="12" cy="14.6" r="2" fill="#f4f5f7" stroke="#3f4d61" stroke-width="1.1"/><rect x="11.4" y="13.6" width="1.3" height="2" fill="#52637a"/><rect x="17.3" y="16.8" width="2.8" height="3" fill="#fff" stroke="#3f4d61" stroke-width="1"/><path d="M18.4,19.8 L18.4,22.4" stroke="#3f4d61" stroke-width="1"/></g><g transform="translate(45,140)"><ellipse cx="11.5" cy="19.6" rx="8.5" ry="2.4" fill="#dcdee2" opacity="1"/><path d="M11.5,1.9 L15,6.7 L12.95,6.7 L12.95,9.95 L16,9.95 L16,8 L21.1,11.4 L16,14.8 L16,12.85 L12.95,12.85 L12.95,16.4 L15,16.4 L11.5,21 L8,16.4 L10.05,16.4 L10.05,12.85 L7,12.85 L7,14.8 L1.9,11.4 L7,8 L7,9.95 L10.05,9.95 L10.05,6.7 L8,6.7 Z" fill="#6a7b8f" stroke="#3f4d61" stroke-width=".9" stroke-linejoin="miter"/><path d="M11.5,8.6 L11.5,14.2 M8.7,11.4 L14.3,11.4" stroke="#aab1bd" stroke-width="1"/></g><g transform="translate(82,140)"><rect x="6.6" y="7.4" width="11.4" height="9" rx="1.2" fill="#e7e8eb" stroke="#aab0bf" stroke-width="1"/><path d="M9,14.5 L11,12 M11.5,14 L13.5,11 M14,13.5 L15.5,11" stroke="#d3d5db" stroke-width=".8"/><rect x="11.8" y="4.1" width="1" height="2.5" fill="#000"/><path d="M10.100000000000001,4.3 L12.3,2.1999999999999997 L14.5,4.3 Z" fill="#000"/><rect x="11.8" y="17.4" width="1" height="2.5" fill="#000"/><path d="M10.100000000000001,19.7 L12.3,21.799999999999997 L14.5,19.7 Z" fill="#000"/><rect x="3.1" y="11.3" width="2.5" height="1" fill="#000"/><path d="M3.3000000000000003,9.600000000000001 L1.2000000000000002,11.8 L3.3000000000000003,14.0 Z" fill="#000"/><rect x="19" y="11.3" width="2.5" height="1" fill="#000"/><path d="M21.3,9.600000000000001 L23.4,11.8 L21.3,14.0 Z" fill="#000"/></g><g transform="translate(119,140)"><path d="M8,21 L20,17.5 L22,20 L12,21.5 Z" fill="#dcdee2"/><path d="M1.6,21.3 L9.4,10.4 L13.4,16.4 Z" fill="#e2e4e8" stroke="#6a7b8f" stroke-width="1"/><path d="M9.4,10.4 L11.5,8 L16.5,14 L13.4,16.4 Z" fill="#fff" stroke="#6a7b8f" stroke-width="1"/><path d="M9.4,10.4 L15.8,3 M13.4,16.4 L21,8.6" stroke="#6a7b8f" stroke-width="1"/><ellipse cx="14.3" cy="9.6" rx="1.3" ry="3.2" transform="rotate(35 14.3 9.6)" fill="none" stroke="#c9ccd4" stroke-width="1"/><rect x="12.6" y="15.4" width="1.6" height="1.6" fill="#3f4d61"/></g><g transform="translate(156,140)"><ellipse cx="14" cy="19.5" rx="9" ry="2" fill="#dcdee2" opacity="0.9"/><rect x="4.2" y="4.2" width="10.6" height="8" fill="#6a7b8f" stroke="#52637a" stroke-width="1"/><rect x="5.5" y="5.4" width="8" height="1" fill="#a9b2c0"/><path d="M13.4,8.3 L20,14.7 L13.4,21 L7,14.7 Z" fill="#6a7b8f" stroke="#52637a" stroke-width="1"/><path d="M13.4,9.8 L18.5,14.7 L13.4,19.5 L8.5,14.7 Z" fill="none" stroke="#dfe2e8" stroke-width=".7"/><path d="M10.5,17.5 L13.4,20.3 L17.3,16.5 Z" fill="#52637a"/><path d="M16,4.6 Q21,3.6 21.2,8 L22.8,8 L20,11.8 L17,8 L18.8,8 Q18.6,6.4 16,6.8 Z" fill="#fff" stroke="#52637a" stroke-width=".9" stroke-linejoin="round"/><path d="M8,21 Q3,22 2.8,17.6 L1.2,17.6 L4,13.8 L7,17.6 L5.2,17.6 Q5.4,19.2 8,18.8 Z" fill="#fff" stroke="#52637a" stroke-width=".9" stroke-linejoin="round"/></g><g transform="translate(8,172)"><ellipse cx="14" cy="21.5" rx="10" ry="1.3" fill="#dcdee2" opacity="0.9"/><rect x="6.7" y="6.5" width="16" height="14" fill="#6a7b8f" stroke="#52637a" stroke-width="1.1"/><rect x="8.2" y="8" width="13" height="11" fill="none" stroke="#b4bcc8" stroke-width=".8"/><path d="M9,4 L15,4 L15,9 M4.5,9 L4.5,14.5" stroke="#8b97a8" stroke-width="1" stroke-dasharray="1 1" fill="none"/><rect x="1.5" y="2.5" width="7.5" height="6" fill="#c5c9cc" stroke="#52637a" stroke-width="1.1"/><rect x="3.5" y="4.3" width="3" height="2.4" fill="#6a7b8f"/><path d="M5,5.5 L15.5,15.5" stroke="#fff" stroke-width="1.6"/><path d="M17.8,17.8 L12.6,16.6 L16.6,12.6 Z" fill="#fff"/><path d="M9.5,15 L11.5,15" stroke="#dfe2e8" stroke-width="1" stroke-dasharray="1 1"/></g><g transform="translate(45,172)"><ellipse cx="14" cy="19.5" rx="9.5" ry="1.5" fill="#dcdee2" opacity="0.8"/><rect x="5.5" y="4.5" width="11.3" height="13" fill="#6a7b8f" stroke="#52637a" stroke-width="1.1"/><path d="M16.8,4.5 L21,17.5 L8.5,17.5 L6.5,8" fill="none" stroke="#6a7b8f" stroke-width="1"/><path d="M7,8.5 L9.8,16 L19.2,16 L16,6" fill="none" stroke="#c5ccd6" stroke-width=".8"/><path d="M3.4,17.6 L7,17.6 L7,15.8 L10.6,18.8 L7,21.8 L7,20 L3.4,20 Z" fill="#fff" stroke="#52637a" stroke-width=".9"/></g><g transform="translate(82,172)"><ellipse cx="12" cy="21" rx="10.5" ry="1.5" fill="#dcdee2" opacity="0.8"/><path d="M7.3,3.6 L16.8,3.6 L21.1,17.4 L2.6,17.4 Z" fill="#8a97a9" stroke="#6a7b8f" stroke-width="1.1"/><path d="M7.6,4.2 L16.5,4.2 L17.5,15 L6.5,15 Z" fill="#6a7b8f"/><path d="M6.5,15 L17.5,15 L19.5,17 L4.5,17 Z" fill="#a4aebc"/><rect x="8" y="4.2" width="8" height="1" fill="#a9b2c0"/><rect x="2.9" y="17.2" width="4.8" height="4.8" fill="#fff" stroke="#52637a" stroke-width="1"/><path d="M6.6,18.4 L4.2,20.8 M4.2,18.8 L4.2,20.8 L6.2,20.8" stroke="#52637a" stroke-width=".9" fill="none"/><rect x="16.1" y="17.2" width="4.8" height="4.8" fill="#fff" stroke="#52637a" stroke-width="1"/><path d="M17.2,18.4 L19.6,20.8 M19.6,18.8 L19.6,20.8 L17.6,20.8" stroke="#52637a" stroke-width=".9" fill="none"/></g><g transform="translate(119,172)"><ellipse cx="11" cy="21.5" rx="10" ry="1.5" fill="#dcdee2" opacity="0.9"/><path d="M13.7,2.8 L20.6,1.4 L20.6,21.6 L13.7,19.8 Z" fill="#dcdde2" stroke="#6a7b8f" stroke-width="1.1"/><rect x="13.7" y="4" width="2.6" height="15" fill="#b7bcc8"/><rect x="1.3" y="3.2" width="12.4" height="16.4" fill="#cfd4dc" stroke="#52637a" stroke-width="1.2"/><rect x="2.6" y="4.6" width="5" height="13.6" fill="#52637a"/><rect x="7.6" y="4.6" width="4.8" height="13.6" fill="#7c8ba0"/><path d="M4,11.3 L7.6,8 L7.6,10 L15,10 L15,8 L18.7,11.3 L15,14.6 L15,12.6 L7.6,12.6 L7.6,14.6 Z" fill="#fff" stroke="#c9ced8" stroke-width=".6"/></g><g transform="translate(156,172)"><ellipse cx="13" cy="19.5" rx="3" ry="1" fill="#dcdee2" opacity="0.8"/><path d="M5.3,4.3 L19.4,7.2 L18.5,19.6 L11.3,12.4 L4.3,17.5 Z" fill="none" stroke="#6a7b8f" stroke-width="2.6"/><path d="M5.3,4.3 L19.4,7.2 L18.5,19.6 L11.3,12.4 L4.3,17.5 Z" fill="none" stroke="#d6d9e0" stroke-width="1.2"/><circle cx="5.3" cy="4.3" r="2.9" fill="#c3c8d2" stroke="#52637a" stroke-width="1"/><path d="M2.9,4.6 A2.4,2.4 0 0 0 7.699999999999999,4.6 Z" fill="#7d8ca1"/><rect x="3.6999999999999997" y="3.8" width="3.2" height=".9" fill="#eef0f3"/><circle cx="19.4" cy="7.2" r="2.9" fill="#c3c8d2" stroke="#52637a" stroke-width="1"/><path d="M17.0,7.5 A2.4,2.4 0 0 0 21.799999999999997,7.5 Z" fill="#7d8ca1"/><rect x="17.799999999999997" y="6.7" width="3.2" height=".9" fill="#eef0f3"/><circle cx="11.3" cy="12.4" r="2.9" fill="#c3c8d2" stroke="#52637a" stroke-width="1"/><path d="M8.9,12.700000000000001 A2.4,2.4 0 0 0 13.700000000000001,12.700000000000001 Z" fill="#7d8ca1"/><rect x="9.700000000000001" y="11.9" width="3.2" height=".9" fill="#eef0f3"/><circle cx="4.3" cy="17.5" r="2.9" fill="#c3c8d2" stroke="#52637a" stroke-width="1"/><path d="M1.9,17.8 A2.4,2.4 0 0 0 6.699999999999999,17.8 Z" fill="#7d8ca1"/><rect x="2.6999999999999997" y="17.0" width="3.2" height=".9" fill="#eef0f3"/><circle cx="18.5" cy="19.6" r="2.9" fill="#c3c8d2" stroke="#52637a" stroke-width="1"/><path d="M16.1,19.900000000000002 A2.4,2.4 0 0 0 20.9,19.900000000000002 Z" fill="#7d8ca1"/><rect x="16.9" y="19.1" width="3.2" height=".9" fill="#eef0f3"/></g><g transform="translate(8,204)"><ellipse cx="12" cy="21.5" rx="6" ry="1.2" fill="#dcdee2" opacity="1"/><defs><linearGradient id="ag" x1="0" y1="0" x2="1" y2="1"><stop offset="0" stop-color="#5a6a80"/><stop offset=".45" stop-color="#2a3650"/><stop offset="1" stop-color="#151d30"/></linearGradient></defs><path d="M8.2,1 L15.8,1 L23,20.6 L16.8,20.6 L15.4,16.4 L8.6,16.4 L7.2,20.6 L1,20.6 Z M10.2,11.8 L13.8,11.8 L12,6.2 Z" fill="url(#ag)" fill-rule="evenodd"/></g><g transform="translate(45,204)"><rect x="7" y="19.3" width="19" height="1.2" fill="#c9ccd2" opacity=".8"/><rect x="11" y="20.5" width="10" height="1" fill="#c9ccd2" opacity=".7"/><defs><linearGradient id="bk" x1="0" y1="0" x2="1" y2="0"><stop offset="0" stop-color="#e6e8eb"/><stop offset=".5" stop-color="#ffffff"/><stop offset="1" stop-color="#d9dce1"/></linearGradient></defs><path d="M12.4,5.4 L12.4,3.4 Q12.5,1 15.5,1 Q18.7,1 18.7,3.4 L18.8,9.5" fill="none" stroke="#3f5068" stroke-width="1.2"/><path d="M5,9.8 L14.5,4 L21.8,14.7 Q22.2,15.6 21.4,16.1 L12.4,21.3 Q11.4,21.7 10.8,20.8 Z" fill="url(#bk)" stroke="#3f5068" stroke-width="1.2" stroke-linejoin="round"/><path d="M15,6 L20.3,14.5 L17.5,16 L13.5,8.5 Z" fill="#d4d7dc"/><path d="M5.6,10.2 L3,8.7 Q1.3,8.7 1.3,10.2 L1.3,16.6 Q1.4,17.8 2.6,17.8 Q3.8,17.8 3.8,16.6 L3.8,11.4 L5.9,10.8" fill="#eef0f3" stroke="#3f5068" stroke-width="1.1" stroke-linejoin="round"/><path d="M12.4,4.8 L12.4,9.6" stroke="#3f5068" stroke-width="1.1"/><circle cx="12.4" cy="11.4" r="1.9" fill="#e9ebef" stroke="#3f5068" stroke-width="1.4"/></g><g transform="translate(82,204)"><ellipse cx="12" cy="21.5" rx="10" ry="1.2" fill="#dcdee2" opacity="0.9"/><defs><linearGradient id="gg" x1="0" y1="0" x2="1" y2="0"><stop offset="0" stop-color="#52637a"/><stop offset=".35" stop-color="#6f7f94"/><stop offset=".55" stop-color="#a9aab6"/><stop offset=".8" stop-color="#d6d9dd"/><stop offset="1" stop-color="#fff"/></linearGradient></defs><rect x="3.5" y="3.4" width="17" height="17" fill="#fff" stroke="#52637a" stroke-width="1"/><rect x="5" y="5" width="14" height="14.4" fill="url(#gg)"/><rect x="4.3" y="19" width="15.4" height="1" fill="#6a7b8f"/></g><g transform="translate(119,204)"><ellipse cx="10" cy="22.2" rx="5" ry="0.8" fill="#dcdee2" opacity="1"/><path d="M3.4,20.6 L5,15 L17.5,3.6 Q19.5,2.4 21.3,4.3 Q22.6,6.3 21,8 L8.5,19.2 Z" fill="#52637a" stroke="#3f4d61" stroke-width=".8"/><path d="M6.5,15.5 L16.5,6.3 L18.5,6" stroke="#f2da1e" stroke-width="1.4" fill="none"/><path d="M3.4,20.6 L5,15 L8.5,19.2 Z" fill="#d5d8de" stroke="#3f4d61" stroke-width=".7"/><path d="M3.4,20.6 L4,18.6 L5.2,20 Z" fill="#3f4d61"/><path d="M18,4.2 Q20,3.2 21,5" stroke="#c5cad3" stroke-width=".9" fill="none"/></g><g transform="translate(156,204)"><ellipse cx="15" cy="22.3" rx="4.5" ry="0.8" fill="#dcdee2" opacity="1"/><path d="M20.6,1.4 Q21.5,2 20.8,4 L13.5,16.5 L9.5,13.5 L18.5,2.5 Q19.8,1 20.6,1.4 Z" fill="#6e7a8a" stroke="#3f4d61" stroke-width=".6"/><path d="M10.3,12.6 L13.8,15.4 L11.6,19 L7.4,16 Z" fill="#eef0f3" stroke="#6a7b8f" stroke-width=".8"/><path d="M1,22.8 L7.2,15.8 Q9,15.2 10.8,16.6 Q12.3,18 11.6,20 Q10.5,22.6 6,22.8 Z" fill="#05070c"/><path d="M7,18 L9,19.5" stroke="#6a7b8f" stroke-width="1"/></g><g transform="translate(8,236)"><ellipse cx="10" cy="20.2" rx="8" ry="1" fill="#dcdee2" opacity="0.9"/><path d="M2.2,14.4 L2.2,17.2 Q2.3,18.6 4,18.6 L15.8,18.6 Q17.2,18.6 17.8,17 L20.8,9 L20.8,5.6 Q20.6,4.2 19,4.2 L8,4.2 Q6.8,4.2 6.2,5.4 Z" fill="#6a7b8f" stroke="#263149" stroke-width="1.3" stroke-linejoin="round"/><path d="M3.2,13.6 L7,5.6 Q7.3,5 8,5 L19,5 Q20,5 19.8,6.2 L16.8,13 Q16.4,13.8 15.5,13.8 Z" fill="#a5a7b4"/><path d="M3,14.4 L16,14.4 Q17,14.2 17.4,13.2" stroke="#c9ccd6" stroke-width=".8" fill="none"/></g><g transform="translate(45,236)"><path d="M12,15 Q14,19 17.5,17 Q19,15 22,15.5 M14,14 L18.5,19.5" stroke="#8e9aab" stroke-width="1.3" fill="none"/><path d="M13,8 L10,6.5 L9,7.8 L11.5,9.5" fill="#6a7b8f" stroke="#52637a" stroke-width=".6"/><path d="M22,3 Q23,4.2 22,5.5 L14.5,13 L11.8,10.3 L19.3,2.8 Q20.8,1.8 22,3 Z" fill="#263149"/><path d="M20,3.4 L13,10.4 M21.5,4.6 L14.3,11.8" stroke="#5d6e85" stroke-width=".6" stroke-dasharray=".8 .8"/><path d="M11.8,10.3 L14.5,13 L8.2,18.6 Q7,19.2 6.5,18.3 Q6,17.2 6.8,16.4 Z" fill="#eef0f3" stroke="#52637a" stroke-width=".9"/><path d="M6.6,18.4 L2.2,22" stroke="#7f8b9c" stroke-width="1.3"/><rect x="7.6" y="15.5" width="1.2" height="1.2" fill="#f2da1e"/></g><g transform="translate(82,236)"><ellipse cx="9.5" cy="20" rx="7.5" ry="1.3" fill="#dcdee2" opacity="0.9"/><rect x="3.6" y="9" width="12" height="10.4" rx="2.6" fill="#dfe2e7" stroke="#52637a" stroke-width="1.1"/><rect x="5.6" y="12.4" width="8.6" height="5" fill="#263149"/><rect x="5.6" y="12.4" width="4" height="5" fill="#52637a"/><rect x="5" y="14.4" width="9" height=".8" fill="#8f9bad"/><path d="M5.2,5 L5.2,9.6 Q9.5,11.4 13.8,9.6 L13.8,5 Z" fill="#3f4d61"/><ellipse cx="9.5" cy="5" rx="4.3" ry="2" fill="#52637a" stroke="#3f4d61" stroke-width=".9"/><ellipse cx="9.5" cy="5.2" rx="2" ry=".7" fill="#3f4d61"/><path d="M16.5,20.5 L22,18 M19.5,16.5 L19,22.2 M17,17.5 L21.5,21.5 M15,21.5 L16,21.5 M22,15.5 L22.4,16.2" stroke="#263149" stroke-width="1.1"/></g><g transform="translate(119,236)"><ellipse cx="11.5" cy="19.6" rx="10" ry="1.7" fill="#dcdee2" opacity="0.9"/><rect x="4.2" y="11.2" width="14.4" height="7.4" rx="2.4" fill="#f5f6f8" stroke="#263149" stroke-width="1.1"/><rect x="6" y="14.5" width="11" height="1.3" fill="#9aa3b2"/><path d="M9.5,14.3 L13.5,14.3 L11.5,16 Z" fill="#263149"/><rect x="10.8" y="8.6" width="1.7" height="4" fill="#fff" stroke="#6a7b8f" stroke-width=".7"/><circle cx="11.6" cy="5.9" r="3.2" fill="#f3f4f6" stroke="#52637a" stroke-width="1"/><circle cx="11.6" cy="5.6" r="1.4" fill="#dcdde2"/><rect x="14" y="7.6" width="1.1" height="1.1" fill="#f2da1e"/></g><g transform="translate(156,236)"><g fill="#f2da1e" stroke="#f2da1e" stroke-linejoin="round"><path d="M7.4,3.2 Q9.4,3 10.6,4.4 L12,6.6 L13.4,4.4 Q14.6,3 16.6,3.2 Q20,3.2 20.8,6.2 Q21,8.4 19.6,9.6 L16.2,12 L19.6,14.4 Q21,15.6 20.8,17.8 Q20,20.8 16.6,20.8 Q14.6,21 13.4,19.6 L12,17.4 L10.6,19.6 Q9.4,21 7.4,20.8 Q4,20.8 3.2,17.8 Q3,15.6 4.4,14.4 L7.8,12 L4.4,9.6 Q3,8.4 3.2,6.2 Q4,3.2 7.4,3.2 Z"/></g><path d="M4.5,7 Q5,4.5 7.8,4.3 M16.4,4.3 Q19,4.5 19.6,7" stroke="#f7eda0" stroke-width=".8" fill="none" stroke-dasharray="1.4 1.2"/><rect x="9.5" y="9.3" width="1.2" height="1.2" fill="#f7eda0"/></g><g transform="translate(8,268)"><path d="M2,7.4 L20.8,5.8 L20.8,22.2 L2,18.2 Z" fill="#6a7b8f" stroke="#3f4d61" stroke-width="1.2" stroke-linejoin="round"/><path d="M3.6,9 L19.2,7.6 L19.2,20.2 L3.6,17 Z" fill="none" stroke="#c9ced8" stroke-width=".8"/><path d="M12,16 L19,18 L19,20 L8,17.5 Z" fill="#8796aa"/><rect x="2.6" y="9.2" width="11" height="5" rx="1.6" fill="#f5f6f8" stroke="#3f4d61" stroke-width="1"/><rect x="4.6" y="11.6" width="7" height="1" fill="#3f4d61"/><rect x="7.3" y="6.6" width="1.8" height="3" fill="#fff" stroke="#6a7b8f" stroke-width=".6"/><circle cx="8.2" cy="4" r="3" fill="#f3f4f6" stroke="#6a7b8f" stroke-width="1"/><rect x="10.6" y="5" width="1.1" height="1.1" fill="#f2da1e"/></g><g transform="translate(45,268)"><ellipse cx="11.5" cy="20.4" rx="9" ry="2.2" fill="#dcdee2" opacity="1"/><ellipse cx="11.5" cy="20.6" rx="6" ry="1.2" fill="#c5c8cf"/><path d="M11.5,4.2 C12.5,8 17.8,10.5 17.8,14.6 A6.3,6 0 0 1 5.2,14.6 C5.2,10.5 10.5,8 11.5,4.2 Z" fill="#e3e5ea" stroke="#6a7b8f" stroke-width="1.1"/><path d="M11.3,8 C13,11.5 16,12.5 16,15 Q15,18.8 10.5,18.8 Q7.5,18 7.5,15.5 Q10.5,14.5 10.5,11.5 Z" fill="#a9adb9"/><path d="M7.6,12.5 Q8.6,10.5 10,9" stroke="#fff" stroke-width="1" fill="none"/></g><g transform="translate(82,268)"><ellipse cx="14" cy="16.5" rx="8" ry="3.6" fill="#dcdee2"/><path d="M4,19 Q4.5,17.5 6.5,16.5 L5,13 Q5,10 8,9 L12.5,6 Q14,5 14.5,7 L13,9.5 Q17,9 16.8,12.5 Q17,16 12.5,17 L8.5,17 L6.5,19.6 Q5,20.5 4,19 Z" fill="#a9afba" stroke="#6a7b8f" stroke-width="1"/><path d="M5.5,11 L9,14.5 M6.5,10 L10,13.5 M8,9.3 L10.5,12" stroke="#52637a" stroke-width=".6"/><path d="M13,6 L17.5,3.6 L18.8,5 L15,8.5" fill="#c9ccd4" opacity=".8"/></g><g transform="translate(119,268)"><path d="M5,19.5 L17,17 L21,12.5 L19,12 L15.5,16 Z" fill="#dcdee2"/><path d="M10.5,13.6 L20.8,3.4" stroke="#263149" stroke-width="2.8" stroke-linecap="round"/><circle cx="10.1" cy="14" r="6" fill="#2c394f"/><circle cx="10" cy="14.2" r="3.4" fill="#3f4d61"/><path d="M4.6,15 A5.4,5.4 0 0 0 13,18.6" stroke="#141b2b" stroke-width="1.2" fill="none"/></g></svg><div class="b" style="left:83px;top:314px;width:38px;height:28px;background:#000;border-top:2px solid #f8f8fa;border-left:2px solid #f8f8fa;box-shadow:inset -1px -1px 0 #000, inset -2px -2px 0 #8f97a8;"></div><div class="b" style="left:67px;top:300px;width:38px;height:28px;background:#fff;border-top:1px solid #000;border-left:2px solid #000;border-right:1px solid #f6f6f8;border-bottom:1px solid #f6f6f8;box-shadow:0 -1px 0 rgba(106,123,143,.55), -1px 0 0 rgba(106,123,143,.35);"></div><div class="b" style="left:71px;top:334px;width:8px;height:8px;background:#fff;border:1px solid #6a7b8f;"></div><div class="b" style="left:67px;top:330px;width:8px;height:8px;background:#000;border-top:1px solid #52637a;border-left:1px solid #52637a;"></div><svg style="left:108px;top:299px" width="14" height="14"><path d="M1.2,4.3 L4.6,1 L4.6,3 L8,3 Q10.4,3.2 10.4,5.6 L10.4,8 L12.6,8 L9.3,12.4 L6,8 L8,8 L8,6.2 Q8,5.6 7.4,5.6 L4.6,5.6 L4.6,7.6 Z" fill="#fff" stroke="#5d6f87" stroke-width="1" stroke-linejoin="round"/></svg><div class="b" style="left:3px;top:373px;width:184px;height:450px;background:#fff;border-top:1px solid #9aa5b8;border-right:1px solid #9aa5b8;"></div><div class="b" style="left:3px;top:344px;width:33px;height:30px;background:#fdfdfe;border:1px solid #9aa5b8;border-top:1px solid #6f8198;border-left:none;border-bottom:none;border-radius:3px 4px 0 0;box-shadow:inset 0 2px 0 #e3e5ea;"></div><div class="b" style="left:9px;top:352px;width:18px;height:16px;background:#f2f3f6;border:1px solid #a9b1c0;border-radius:1px;box-shadow:0 1px 0 #d5d8de;"></div><svg style="left:9px;top:352px" width="18" height="16" shape-rendering="crispEdges"><rect x="2" y="2" width="14" height="2" fill="#dcdee3"/><rect x="3" y="4" width="4" height="4" fill="#fff" stroke="#8f9bad" stroke-width="1"/><rect x="4" y="9" width="3" height="4" fill="#6a7b8f"/><rect x="11" y="4" width="3" height="3" fill="#6a7b8f"/><rect x="10" y="7" width="4" height="4" fill="#fff" stroke="#52637a" stroke-width="1"/><rect x="11" y="12" width="3" height="2" fill="#6a7b8f"/></svg><div class="b" style="left:170px;top:354px;width:11px;height:11px;border:1px solid #7f8fa6;border-radius:2px;background:#f4f5f8;"></div><svg style="left:172px;top:356px" width="7" height="7"><path d="M5.6,0.4 L0.8,3.4 L5.6,6.4 Z" fill="#7588a0"/></svg><div class="t" style="top:376.1px;font-size:11px;line-height:14px;color:#000;left:5.8px;transform:scaleX(0.9405);transform-origin:0 0;font-weight:bold;">Cubell de pintura</div><div class="b" style="left:6px;top:391px;width:177px;height:432px;background:#f1f1f5;"></div><div class="t" style="top:394.2px;font-size:11px;line-height:14px;color:#000;left:5.8px;transform:scaleX(0.8274);transform-origin:0 0;">Mode:</div><div class="b" style="left:34px;top:391px;width:137px;height:21px;background:#fff;border:1px solid #9aa5b8;"></div><div class="t" style="top:394.2px;font-size:11px;line-height:14px;color:#000;left:36.6px;transform:scaleX(0.8462);transform-origin:0 0;">Normal</div><div class="b" style="left:170px;top:392px;width:13px;height:19px;background:linear-gradient(#eceef2,#d6d9e0);border:1px solid #b4bcc9;border-right:none;border-radius:2px 0 0 2px;"></div><svg style="left:173px;top:398.5px" width="10" height="8"><path d="M1,1.4 L5,5.4 L9,1.4" fill="none" stroke="#3f5068" stroke-width="2.7"/></svg><div class="b" style="left:6px;top:416px;width:174px;height:26px;background:#c5c9cc;border:1px solid #10161f;border-bottom:2px solid #1a2333;"></div><div class="b" style="left:180px;top:416px;width:3px;height:26px;background:#fff;border-top:1px solid #1a2333;border-bottom:2px solid #1a2333;"></div><div class="b" style="left:181px;top:419px;width:1px;height:21px;background:#6a7b8f;"></div><div class="b" style="left:182px;top:423px;width:1px;height:3px;background:#9aa5b8;"></div><div class="b" style="left:182px;top:433px;width:1px;height:3px;background:#9aa5b8;"></div><div class="t" style="top:421.6px;font-size:11px;line-height:14px;color:#000;left:8.2px;transform:scaleX(0.8299);transform-origin:0 0;">Opacitat</div><div class="t" style="top:421.6px;font-size:11px;line-height:14px;color:#000;left:155.6px;transform:scaleX(0.7918);transform-origin:0 0;">100,0</div><div class="t" style="top:444.6px;font-size:11px;line-height:14px;color:#000;left:5.8px;transform:scaleX(0.8442);transform-origin:0 0;">Manera d&#x27;omplir (Ctrl)</div><div class="b" style="left:20.0px;top:462.0px;width:13px;height:13px;border-radius:50%;background:radial-gradient(circle at 40% 35%,#ffffff 30%,#e3e6ea 90%);border:1px solid #60718a;box-shadow:0 0 0 .4px #8f9bb0;"></div><div class="b" style="left:24.0px;top:466.0px;width:5px;height:5px;border-radius:40%;background:#62738a;transform:rotate(45deg);"></div><div class="t" style="top:461.6px;font-size:11px;line-height:14px;color:#000;left:37.9px;transform:scaleX(0.8438);transform-origin:0 0;">Omple amb el color del primer pla</div><div class="b" style="left:20.0px;top:482.0px;width:13px;height:13px;border-radius:50%;background:radial-gradient(circle at 40% 35%,#ffffff 30%,#e3e6ea 90%);border:1px solid #60718a;box-shadow:0 0 0 .4px #8f9bb0;"></div><div class="t" style="top:481.6px;font-size:11px;line-height:14px;color:#000;left:37.9px;transform:scaleX(0.8438);transform-origin:0 0;">Omple amb el color de fons</div><div class="b" style="left:20.0px;top:502.0px;width:13px;height:13px;border-radius:50%;background:radial-gradient(circle at 40% 35%,#ffffff 30%,#e3e6ea 90%);border:1px solid #60718a;box-shadow:0 0 0 .4px #8f9bb0;"></div><div class="t" style="top:501.6px;font-size:11px;line-height:14px;color:#000;left:37.9px;transform:scaleX(0.8519);transform-origin:0 0;">Omple amb el patró</div><div class="b" style="left:40px;top:520px;width:30px;height:30px;background:#fbfbfc;border:1px solid #c9cdd5;border-radius:2px;"></div><div class="b" style="left:43px;top:523px;width:25px;height:24px;background:#f2da1e;"></div><div class="b" style="left:43px;top:523px;width:2px;height:24px;background:#3f4d61;"></div><div class="b" style="left:59px;top:523px;width:1px;height:24px;background:#c9b12a;"></div><div class="b" style="left:73px;top:525px;width:112px;height:19px;background:#f1f1f5;border:1px solid #9aa5b8;border-right:none;"></div><div class="t" style="top:527.6px;font-size:11px;line-height:14px;color:#9ea3ab;left:76.8px;transform:scaleX(0.8079);transform-origin:0 0;">Pine</div><div class="t" style="top:553.1px;font-size:11px;line-height:14px;color:#000;left:5.8px;transform:scaleX(0.8455);transform-origin:0 0;">Àrea afectada (Majús)</div><div class="b" style="left:20.0px;top:571.0px;width:13px;height:13px;border-radius:50%;background:radial-gradient(circle at 40% 35%,#ffffff 30%,#e3e6ea 90%);border:1px solid #60718a;box-shadow:0 0 0 .4px #8f9bb0;"></div><div class="t" style="top:570.6px;font-size:11px;line-height:14px;color:#000;left:37.9px;transform:scaleX(0.8363);transform-origin:0 0;">Omple tota la selecció</div><div class="b" style="left:20.0px;top:592.0px;width:13px;height:13px;border-radius:50%;background:radial-gradient(circle at 40% 35%,#ffffff 30%,#e3e6ea 90%);border:1px solid #60718a;box-shadow:0 0 0 .4px #8f9bb0;"></div><div class="b" style="left:24.0px;top:596.0px;width:5px;height:5px;border-radius:40%;background:#62738a;transform:rotate(45deg);"></div><div class="t" style="top:591.3px;font-size:11px;line-height:14px;color:#000;left:37.9px;transform:scaleX(0.8333);transform-origin:0 0;">Omple amb colors semblants</div><div class="t" style="top:610.4px;font-size:11px;line-height:14px;color:#000;left:5.8px;transform:scaleX(0.8193);transform-origin:0 0;">Cerca de colors semblants</div><div class="b" style="left:20px;top:628px;width:13px;height:13px;background:linear-gradient(135deg,#dfe2e7,#fff 70%);border:1px solid #60718a;"></div><svg style="left:22px;top:630px" width="10" height="10"><path d="M1.2,4.2 L3.8,7.2 L8.4,1.8" fill="none" stroke="#5a6b84" stroke-width="2.3"/></svg><div class="t" style="top:627.6px;font-size:11px;line-height:14px;color:#000;left:37.9px;transform:scaleX(0.8268);transform-origin:0 0;">Omple les àrees transparents</div><div class="b" style="left:20px;top:647px;width:13px;height:13px;background:linear-gradient(135deg,#dfe2e7,#fff 70%);border:1px solid #60718a;"></div><div class="t" style="top:646.0px;font-size:11px;line-height:14px;color:#000;left:37.4px;transform:scaleX(0.8271);transform-origin:0 0;">Mostra fusionada</div><div class="b" style="left:18px;top:663px;width:165px;height:27px;background:#fff;border:1px solid #10161f;border-right:none;border-bottom:2px solid #3a4354;"></div><div class="b" style="left:19px;top:664px;width:9px;height:24px;background:#c5c9cc;border-right:1px solid #1a2333;"></div><div class="b" style="left:181px;top:666px;width:1px;height:21px;background:#6a7b8f;"></div><div class="b" style="left:182px;top:670px;width:1px;height:3px;background:#9aa5b8;"></div><div class="b" style="left:182px;top:680px;width:1px;height:3px;background:#9aa5b8;"></div><div class="t" style="top:668.2px;font-size:11px;line-height:14px;color:#000;left:19.6px;transform:scaleX(0.8125);transform-origin:0 0;">Llindar blanc i negre</div><div class="t" style="top:668.2px;font-size:11px;line-height:14px;color:#000;left:160.6px;transform:scaleX(0.7796);transform-origin:0 0;">15,0</div><div class="t" style="top:692.2px;font-size:11px;line-height:14px;color:#000;left:17.8px;transform:scaleX(0.8325);transform-origin:0 0;">Omple segons el canal:</div><div class="b" style="left:116px;top:690px;width:55px;height:20px;background:#fff;border:1px solid #9aa5b8;"></div><div class="t" style="top:692.2px;font-size:11px;line-height:14px;color:#000;left:119.0px;transform:scaleX(0.8057);transform-origin:0 0;">Composició</div><div class="b" style="left:170px;top:691px;width:13px;height:18px;background:linear-gradient(#eceef2,#d6d9e0);border:1px solid #b4bcc9;border-right:none;border-radius:2px 0 0 2px;"></div><svg style="left:173px;top:697.0px" width="10" height="8"><path d="M1,1.4 L5,5.4 L9,1.4" fill="none" stroke="#3f5068" stroke-width="2.7"/></svg><div class="b" style="left:183px;top:374px;width:3px;height:449px;background:#fff;"></div><div class="b" style="left:700px;top:51px;width:1px;height:574px;background:#6a7b8f;"></div><div class="b" style="left:701px;top:51px;width:3px;height:575px;background:linear-gradient(90deg,rgba(120,128,142,.75),rgba(150,156,168,.35) 50%,rgba(200,204,212,0));"></div><div class="b" style="left:387px;top:624px;width:314px;height:1px;background:#6a7b8f;"></div><div class="b" style="left:387px;top:625px;width:315px;height:3px;background:linear-gradient(180deg,rgba(120,128,142,.75),rgba(150,156,168,.35) 50%,rgba(200,204,212,0));"></div><div class="b" style="left:380px;top:44px;width:320px;height:580px;background:#f1f1f5;border:1px solid #c8ccd0;box-shadow:inset 1px 1px 0 #f9f9fb;"></div><div class="t" style="top:50.6px;font-size:11px;line-height:14px;color:#000;left:410.3px;transform:scaleX(0.9590);transform-origin:0 0;">Re<u>p</u>eteix «Puzle»</div><div class="t" style="top:50.6px;font-size:11px;line-height:14px;color:#000;left:658.7px;transform:scaleX(1.0248);transform-origin:0 0;">Ctrl+F</div><div class="t" style="top:72.6px;font-size:11px;line-height:14px;color:#000;left:410.3px;transform:scaleX(0.9738);transform-origin:0 0;">To<u>r</u>na a mostrar «Puzle»</div><div class="t" style="top:72.6px;font-size:11px;line-height:14px;color:#000;left:622.7px;transform:scaleX(1.0147);transform-origin:0 0;">Majús+Ctrl+F</div><div class="t" style="top:93.6px;font-size:11px;line-height:14px;color:#000;left:410.3px;transform:scaleX(0.9934);transform-origin:0 0;">Utilitzats recentment</div><svg style="left:688px;top:96.4px" width="5" height="7"><path d="M0,0 L4.2,3.5 L0,7 Z" fill="#000"/></svg><div class="t" style="top:112.6px;font-size:11px;line-height:14px;color:#000;left:410.3px;transform:scaleX(0.9631);transform-origin:0 0;">Recupera els valors inicials dels <u>f</u>iltres</div><div class="b" style="left:386px;top:133px;width:308px;height:1px;background:#a1a5b1;"></div><div class="t" style="top:139.6px;font-size:11px;line-height:14px;color:#000;left:410.3px;transform:scaleX(0.9307);transform-origin:0 0;"><u>D</u>ifumina</div><svg style="left:688px;top:142.4px" width="5" height="7"><path d="M0,0 L4.2,3.5 L0,7 Z" fill="#000"/></svg><div class="t" style="top:156.6px;font-size:11px;line-height:14px;color:#000;left:410.3px;transform:scaleX(0.9257);transform-origin:0 0;"><u>M</u>illora</div><svg style="left:688px;top:159.4px" width="5" height="7"><path d="M0,0 L4.2,3.5 L0,7 Z" fill="#000"/></svg><div class="t" style="top:173.6px;font-size:11px;line-height:14px;color:#000;left:410.3px;transform:scaleX(0.9558);transform-origin:0 0;"><u>D</u>istorsions</div><svg style="left:688px;top:176.4px" width="5" height="7"><path d="M0,0 L4.2,3.5 L0,7 Z" fill="#000"/></svg><div class="t" style="top:190.6px;font-size:11px;line-height:14px;color:#000;left:410.3px;transform:scaleX(0.9252);transform-origin:0 0;"><u>L</u>lums i ombres</div><svg style="left:688px;top:193.4px" width="5" height="7"><path d="M0,0 L4.2,3.5 L0,7 Z" fill="#000"/></svg><div class="t" style="top:207.6px;font-size:11px;line-height:14px;color:#000;left:410.3px;transform:scaleX(0.9244);transform-origin:0 0;"><u>S</u>oroll</div><svg style="left:688px;top:210.4px" width="5" height="7"><path d="M0,0 L4.2,3.5 L0,7 Z" fill="#000"/></svg><div class="t" style="top:224.6px;font-size:11px;line-height:14px;color:#000;left:410.3px;transform:scaleX(0.9768);transform-origin:0 0;">De<u>t</u>ecció de vores</div><svg style="left:688px;top:227.4px" width="5" height="7"><path d="M0,0 L4.2,3.5 L0,7 Z" fill="#000"/></svg><div class="t" style="top:241.6px;font-size:11px;line-height:14px;color:#000;left:410.3px;transform:scaleX(0.9343);transform-origin:0 0;"><u>G</u>enèric</div><svg style="left:688px;top:244.4px" width="5" height="7"><path d="M0,0 L4.2,3.5 L0,7 Z" fill="#000"/></svg><div class="t" style="top:258.6px;font-size:11px;line-height:14px;color:#000;left:410.3px;transform:scaleX(0.9312);transform-origin:0 0;">C<u>o</u>mbina</div><svg style="left:688px;top:261.4px" width="5" height="7"><path d="M0,0 L4.2,3.5 L0,7 Z" fill="#000"/></svg><div class="t" style="top:275.6px;font-size:11px;line-height:14px;color:#000;left:410.3px;transform:scaleX(0.9814);transform-origin:0 0;"><u>A</u>rtístic</div><svg style="left:688px;top:278.4px" width="5" height="7"><path d="M0,0 L4.2,3.5 L0,7 Z" fill="#000"/></svg><div class="t" style="top:292.6px;font-size:11px;line-height:14px;color:#000;left:410.3px;transform:scaleX(0.9586);transform-origin:0 0;">D<u>e</u>cora</div><svg style="left:688px;top:295.4px" width="5" height="7"><path d="M0,0 L4.2,3.5 L0,7 Z" fill="#000"/></svg><div class="t" style="top:309.6px;font-size:11px;line-height:14px;color:#000;left:410.3px;transform:scaleX(0.9444);transform-origin:0 0;"><u>M</u>apa</div><svg style="left:688px;top:312.4px" width="5" height="7"><path d="M0,0 L4.2,3.5 L0,7 Z" fill="#000"/></svg><div class="b" style="left:382px;top:325px;width:316px;height:17px;background:#677990;"></div><div class="t" style="top:326.6px;font-size:11px;line-height:14px;color:#fff;left:410.3px;transform:scaleX(0.9380);transform-origin:0 0;"><u>C</u>ompon</div><svg style="left:688px;top:329.4px" width="5" height="7"><path d="M0,0 L4.2,3.5 L0,7 Z" fill="#fff"/></svg><div class="t" style="top:343.6px;font-size:11px;line-height:14px;color:#000;left:410.3px;transform:scaleX(0.9812);transform-origin:0 0;"><u>W</u>eb</div><svg style="left:688px;top:346.4px" width="5" height="7"><path d="M0,0 L4.2,3.5 L0,7 Z" fill="#000"/></svg><div class="t" style="top:360.6px;font-size:11px;line-height:14px;color:#000;left:410.3px;transform:scaleX(0.9282);transform-origin:0 0;">An<u>i</u>mació</div><svg style="left:688px;top:363.4px" width="5" height="7"><path d="M0,0 L4.2,3.5 L0,7 Z" fill="#000"/></svg><div class="b" style="left:386px;top:379px;width:308px;height:1px;background:#a1a5b1;"></div><div class="t" style="top:384.6px;font-size:11px;line-height:14px;color:#000;left:410.3px;transform:scaleX(1.1102);transform-origin:0 0;">***Masking***</div><svg style="left:688px;top:387.4px" width="5" height="7"><path d="M0,0 L4.2,3.5 L0,7 Z" fill="#000"/></svg><div class="t" style="top:401.6px;font-size:11px;line-height:14px;color:#000;left:410.3px;transform:scaleX(1.1981);transform-origin:0 0;">***Texture***</div><svg style="left:688px;top:404.4px" width="5" height="7"><path d="M0,0 L4.2,3.5 L0,7 Z" fill="#000"/></svg><div class="t" style="top:418.6px;font-size:11px;line-height:14px;color:#000;left:410.3px;transform:scaleX(1.0965);transform-origin:0 0;">**Hidden**</div><svg style="left:688px;top:421.4px" width="5" height="7"><path d="M0,0 L4.2,3.5 L0,7 Z" fill="#000"/></svg><div class="t" style="top:436.6px;font-size:11px;line-height:14px;color:#000;left:410.3px;transform:scaleX(0.9768);transform-origin:0 0;">Canal alfa a <u>l</u>ogotip</div><svg style="left:688px;top:439.4px" width="5" height="7"><path d="M0,0 L4.2,3.5 L0,7 Z" fill="#000"/></svg><div class="t" style="top:453.6px;font-size:11px;line-height:14px;color:#000;left:410.3px;transform:scaleX(0.9435);transform-origin:0 0;">Colors</div><svg style="left:688px;top:456.4px" width="5" height="7"><path d="M0,0 L4.2,3.5 L0,7 Z" fill="#000"/></svg><div class="t" style="top:470.6px;font-size:11px;line-height:14px;color:#000;left:410.3px;transform:scaleX(0.8398);transform-origin:0 0;">RSS</div><svg style="left:688px;top:473.4px" width="5" height="7"><path d="M0,0 L4.2,3.5 L0,7 Z" fill="#000"/></svg><div class="t" style="top:487.6px;font-size:11px;line-height:14px;color:#000;left:410.3px;transform:scaleX(0.9382);transform-origin:0 0;">The Plugin Site</div><svg style="left:688px;top:490.4px" width="5" height="7"><path d="M0,0 L4.2,3.5 L0,7 Z" fill="#000"/></svg><div class="b" style="left:386px;top:506px;width:308px;height:1px;background:#a1a5b1;"></div><div class="t" style="top:512.6px;font-size:11px;line-height:14px;color:#000;left:410.3px;transform:scaleX(0.9852);transform-origin:0 0;">Python-Fu</div><svg style="left:688px;top:515.4px" width="5" height="7"><path d="M0,0 L4.2,3.5 L0,7 Z" fill="#000"/></svg><div class="t" style="top:529.6px;font-size:11px;line-height:14px;color:#000;left:410.3px;transform:scaleX(0.9636);transform-origin:0 0;"><u>S</u>cript-Fu</div><svg style="left:688px;top:532.4px" width="5" height="7"><path d="M0,0 L4.2,3.5 L0,7 Z" fill="#000"/></svg><div class="t" style="top:546.6px;font-size:11px;line-height:14px;color:#000;left:410.3px;transform:scaleX(0.9521);transform-origin:0 0;">Batch Process…</div><div class="t" style="top:563.6px;font-size:11px;line-height:14px;color:#000;left:410.3px;transform:scaleX(0.9642);transform-origin:0 0;">FX-Foundry</div><svg style="left:688px;top:566.4px" width="5" height="7"><path d="M0,0 L4.2,3.5 L0,7 Z" fill="#000"/></svg><div class="t" style="top:580.6px;font-size:11px;line-height:14px;color:#000;left:410.3px;transform:scaleX(0.9673);transform-origin:0 0;">Photoshop Plug-in Settings…</div><div class="b" style="left:386px;top:599px;width:308px;height:1px;background:#a1a5b1;"></div><div class="t" style="top:605.6px;font-size:11px;line-height:14px;color:#000;left:410.3px;transform:scaleX(0.9443);transform-origin:0 0;"><u>G</u>&#x27;MIC…</div><div class="b" style="left:884px;top:329px;width:1px;height:195px;background:#6a7b8f;"></div><div class="b" style="left:885px;top:329px;width:3px;height:196px;background:linear-gradient(90deg,rgba(120,128,142,.75),rgba(150,156,168,.35) 50%,rgba(200,204,212,0));"></div><div class="b" style="left:705px;top:523px;width:180px;height:1px;background:#6a7b8f;"></div><div class="b" style="left:705px;top:524px;width:181px;height:3px;background:linear-gradient(180deg,rgba(120,128,142,.75),rgba(150,156,168,.35) 50%,rgba(200,204,212,0));"></div><div class="b" style="left:698px;top:322px;width:186px;height:201px;background:#f1f1f5;border:1px solid #c8ccd0;box-shadow:inset 1px 1px 0 #f9f9fb;"></div><div class="t" style="top:326.6px;font-size:11px;line-height:14px;color:#000;left:725.3px;transform:scaleX(0.9517);transform-origin:0 0;"><u>N</u>úvols</div><svg style="left:872px;top:329.4px" width="5" height="7"><path d="M0,0 L4.2,3.5 L0,7 Z" fill="#000"/></svg><div class="t" style="top:343.6px;font-size:11px;line-height:14px;color:#000;left:725.3px;"><u>N</u>atura</div><svg style="left:872px;top:346.4px" width="5" height="7"><path d="M0,0 L4.2,3.5 L0,7 Z" fill="#000"/></svg><div class="b" style="left:700px;top:359px;width:182px;height:17px;background:#677990;"></div><div class="t" style="top:360.6px;font-size:11px;line-height:14px;color:#fff;left:725.3px;transform:scaleX(0.9887);transform-origin:0 0;"><u>P</u>atró</div><svg style="left:872px;top:363.4px" width="5" height="7"><path d="M0,0 L4.2,3.5 L0,7 Z" fill="#fff"/></svg><div class="b" style="left:704px;top:379px;width:174px;height:1px;background:#a1a5b1;"></div><div class="t" style="top:385.6px;font-size:11px;line-height:14px;color:#000;left:725.3px;transform:scaleX(0.9841);transform-origin:0 0;"><u>C</u>ircuit…</div><div class="t" style="top:402.6px;font-size:11px;line-height:14px;color:#000;left:725.3px;transform:scaleX(0.9833);transform-origin:0 0;"><u>D</u>issenyador d&#x27;esferes…</div><div class="t" style="top:419.6px;font-size:11px;line-height:14px;color:#000;left:725.3px;transform:scaleX(0.9236);transform-origin:0 0;"><u>E</u>scape Lines</div><div class="t" style="top:436.6px;font-size:11px;line-height:14px;color:#000;left:725.3px;transform:scaleX(0.9879);transform-origin:0 0;"><u>E</u>spirògraf…</div><div class="t" style="top:453.6px;font-size:11px;line-height:14px;color:#000;left:725.3px;transform:scaleX(0.9958);transform-origin:0 0;">Explorador de <u>f</u>ractals…</div><div class="t" style="top:470.6px;font-size:11px;line-height:14px;color:#000;left:725.3px;transform:scaleX(0.9776);transform-origin:0 0;"><u>F</u>igures (Gfig)…</div><div class="t" style="top:487.6px;font-size:11px;line-height:14px;color:#000;left:725.3px;transform:scaleX(0.9868);transform-origin:0 0;"><u>L</u>ava…</div><div class="t" style="top:504.6px;font-size:11px;line-height:14px;color:#000;left:725.3px;transform:scaleX(0.9897);transform-origin:0 0;"><u>R</u>atllat radial…</div><div class="b" style="left:1057px;top:363px;width:1px;height:136px;background:#6a7b8f;"></div><div class="b" style="left:1058px;top:363px;width:3px;height:137px;background:linear-gradient(90deg,rgba(120,128,142,.75),rgba(150,156,168,.35) 50%,rgba(200,204,212,0));"></div><div class="b" style="left:889px;top:498px;width:169px;height:1px;background:#6a7b8f;"></div><div class="b" style="left:889px;top:499px;width:170px;height:3px;background:linear-gradient(180deg,rgba(120,128,142,.75),rgba(150,156,168,.35) 50%,rgba(200,204,212,0));"></div><div class="b" style="left:882px;top:356px;width:175px;height:142px;background:#f1f1f5;border:1px solid #c8ccd0;box-shadow:inset 1px 1px 0 #f9f9fb;"></div><div class="t" style="top:360.6px;font-size:11px;line-height:14px;color:#000;left:909.7px;transform:scaleX(0.9482);transform-origin:0 0;"><u>E</u>xplorador CML…</div><div class="t" style="top:377.6px;font-size:11px;line-height:14px;color:#000;left:909.7px;transform:scaleX(0.9469);transform-origin:0 0;"><u>G</u>raella…</div><div class="t" style="top:394.6px;font-size:11px;line-height:14px;color:#000;left:909.7px;transform:scaleX(0.9849);transform-origin:0 0;"><u>L</u>aberint…</div><div class="t" style="top:411.6px;font-size:11px;line-height:14px;color:#000;left:909.7px;transform:scaleX(0.9786);transform-origin:0 0;">Patrons de <u>d</u>ifracció…</div><div class="b" style="left:884px;top:427px;width:171px;height:17px;background:#677990;"></div><div class="t" style="top:428.6px;font-size:11px;line-height:14px;color:#fff;left:909.7px;transform:scaleX(0.9395);transform-origin:0 0;"><u>P</u>uzle…</div><div class="t" style="top:445.6px;font-size:11px;line-height:14px;color:#000;left:909.7px;transform:scaleX(0.9867);transform-origin:0 0;"><u>Q</u>bist…</div><div class="t" style="top:462.6px;font-size:11px;line-height:14px;color:#000;left:909.7px;transform:scaleX(0.9395);transform-origin:0 0;"><u>S</u>inus…</div><div class="t" style="top:479.6px;font-size:11px;line-height:14px;color:#000;left:909.7px;transform:scaleX(0.9481);transform-origin:0 0;">Tauler d&#x27;es<u>c</u>acs…</div><div class="b" style="left:992px;top:452px;width:279px;height:40px;background:#ffffe1;border:1px solid #000;"></div><div class="t" style="top:453.6px;font-size:11px;line-height:14px;color:#000;left:993.7px;transform:scaleX(0.9837);transform-origin:0 0;">Afegeix a la imatge un patró en forma de trenca closques</div><div class="t" style="top:478.9px;font-size:9.6px;line-height:12px;color:#000;right:1.7px;transform:scaleX(0.9754);transform-origin:100% 0;font-style:italic;">Premeu F1 per a més ajuda</div><svg style="left:380px;top:44px" width="30" height="90"><polygon points="15.70,15.60 15.59,16.53 14.45,17.02 14.06,17.64 14.12,18.88 13.32,19.38 12.23,18.79 11.50,18.88 10.57,19.69 9.68,19.38 9.46,18.16 8.94,17.64 7.72,17.42 7.41,16.53 8.22,15.60 8.31,14.87 7.72,13.78 8.22,12.98 9.46,13.04 10.08,12.65 10.57,11.51 11.50,11.40 12.23,12.41 12.92,12.65 14.12,12.32 14.78,12.98 14.45,14.18 14.69,14.87" fill="#b3b8c3" stroke="#9aa1af" stroke-width="0.8" stroke-linejoin="round"/><circle cx="11.5" cy="15.6" r="1.3" fill="#e4e6ea"/><polygon points="21.60,11.30 21.50,12.28 20.20,12.79 19.84,13.47 20.14,14.84 19.38,15.46 18.09,14.90 17.36,15.13 16.60,16.30 15.62,16.20 15.11,14.90 14.43,14.54 13.06,14.84 12.44,14.08 13.00,12.79 12.77,12.06 11.60,11.30 11.70,10.32 13.00,9.81 13.36,9.13 13.06,7.76 13.82,7.14 15.11,7.70 15.84,7.47 16.60,6.30 17.58,6.40 18.09,7.70 18.77,8.06 20.14,7.76 20.76,8.52 20.20,9.81 20.43,10.54" fill="#e4e7ec" stroke="#5d6e85" stroke-width="1.2" stroke-linejoin="round"/><path d="M16.6,8.6 L19.3,11.3 L16.6,14 L13.9,11.3 Z" fill="#e4e7ec" stroke="#6a7b8f" stroke-width="1"/><rect x="16" y="10.7" width="1.2" height="1.2" fill="#6a7b8f"/><clipPath id="gc2"><rect x="6" y="26" width="20" height="9.5"/></clipPath><g clip-path="url(#gc2)"><polygon points="21.00,34.50 20.91,35.58 19.34,36.15 18.99,36.92 19.55,38.49 18.79,39.25 17.22,38.69 16.45,39.04 15.88,40.61 14.80,40.70 13.96,39.26 13.15,39.04 11.70,39.87 10.81,39.25 11.10,37.61 10.61,36.92 8.97,36.62 8.69,35.58 9.96,34.50 10.04,33.66 8.97,32.38 9.43,31.40 11.10,31.39 11.69,30.80 11.70,29.13 12.68,28.67 13.96,29.74 14.80,29.66 15.88,28.39 16.92,28.67 17.22,30.31 17.91,30.80 19.55,30.51 20.17,31.40 19.34,32.85 19.56,33.66" fill="#e9ebef" stroke="#6a7b8f" stroke-width="1.1" stroke-linejoin="round"/><circle cx="14.8" cy="34.5" r="2.6" fill="none" stroke="#9aa3b2" stroke-width=".9"/></g><rect x="7.3" y="35.5" width="15.4" height="8" fill="#fff" stroke="#5d6e85" stroke-width="1.1"/><text x="8.6" y="42.3" font-family="Liberation Sans" font-weight="bold" font-size="6.6" fill="#52637a">10</text><path d="M17.6,38.8 L19.3,36.9 L21,38.8 Z M17.6,40.4 L19.3,42.3 L21,40.4 Z" fill="#52637a"/><path d="M11.2,70.6 L19.4,70.6 L19.4,80 L14.8,80" fill="none" stroke="#f2da1e" stroke-width="2.7" stroke-linejoin="round"/><path d="M7.6,74.4 L12.6,70 L12.6,73 L15,73 L15,76 L12.6,76 L12.6,78.4 Z" fill="#f2da1e"/><circle cx="11" cy="79.2" r="2.4" fill="#3f5068"/><circle cx="10.6" cy="78.8" r=".8" fill="#8f9bb0"/></svg><div class="b" style="left:999px;top:492px;width:272px;height:1px;background:#6a7b8f;"></div><div class="b" style="left:999px;top:493px;width:272px;height:3px;background:linear-gradient(180deg,rgba(120,128,142,.75),rgba(150,156,168,.35) 50%,rgba(200,204,212,0));"></div>
</body></html>
